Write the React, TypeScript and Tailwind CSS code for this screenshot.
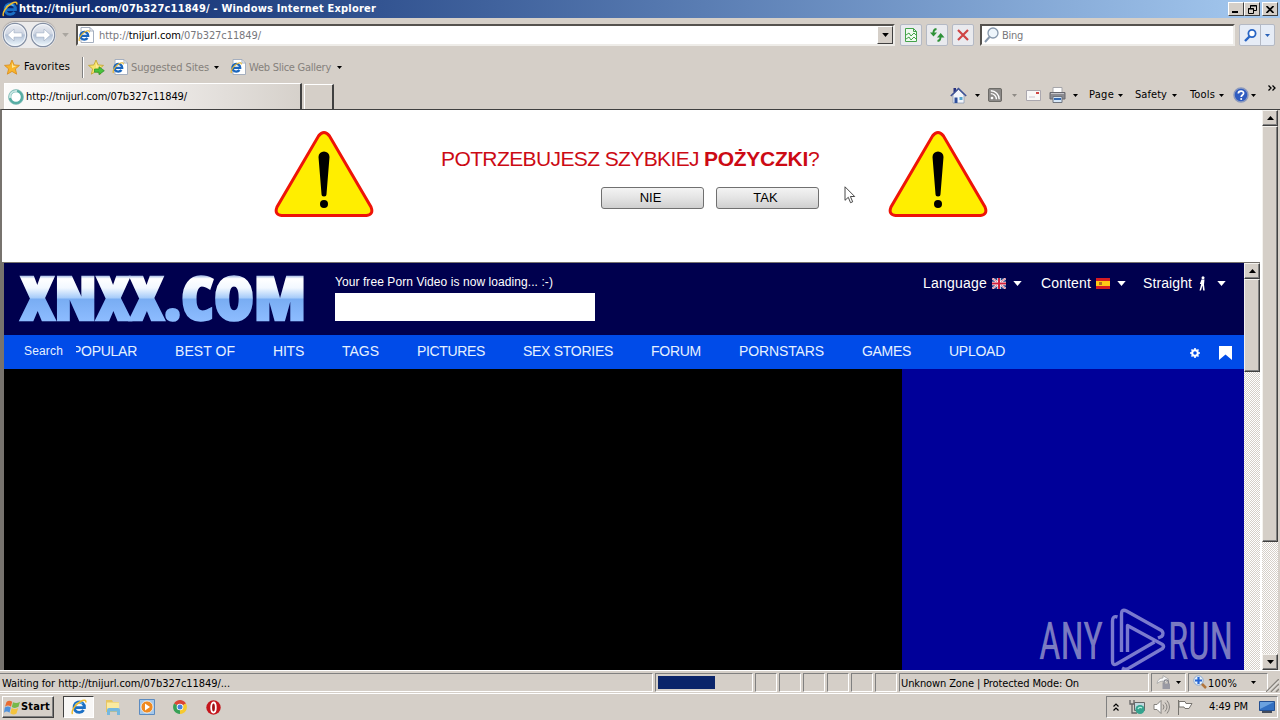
import { ReactNode, useLayoutEffect, useRef, useState } from "react";

const ui = "font-['DejaVu_Sans_Condensed','DejaVu_Sans',sans-serif] font-stretch-condensed text-[11px] leading-[14px]";
const arial = "font-['Liberation_Sans',Arial,sans-serif]";

// Single line of text, tracked so that it fills exactly the given width
const Label = ({ width, className = "", children }: { width: number; className?: string; children: ReactNode }) => {
  const ref = useRef<HTMLSpanElement | null>(null);
  const [spacing, setSpacing] = useState(0);

  useLayoutEffect(() => {
    const el = ref.current;
    if (!el) return;
    const count = el.textContent?.length || 1;
    setSpacing((width - el.getBoundingClientRect().width) / count);
  }, [width]);

  return (
    <span className={`block shrink-0 whitespace-nowrap ${className}`} style={{ width }}>
      <span ref={ref} className="inline-block" style={{ letterSpacing: spacing }}>
        {children}
      </span>
    </span>
  );
};

const Caret = ({ className = "" }: { className?: string }) => (
  <svg className={`h-[3px] w-[5px] shrink-0 ${className}`} viewBox="0 0 5 3" fill="currentColor">
    <path d="M0 0h5L2.5 3z" />
  </svg>
);

const IeIcon = ({ className = "" }: { className?: string }) => (
  <svg className={`shrink-0 ${className}`} viewBox="0 0 16 16" fill="none">
    <path d="M12.6 11A5.200 5.200 0 1 1 13.400 8.600H4.500" stroke="#1b6fc4" strokeWidth="2.900" />
    <path d="M4 6.600a5 5 0 0 1 7.500-2" stroke="#6cc3f5" strokeWidth="1.200" />
    <path d="M1.600 15C-.2 12.500 4 5.500 9.500 2.500c3.300-1.800 6-1.900 5.200 1" stroke="#f0bb2c" strokeWidth="1.500" />
  </svg>
);

const IePage = () => (
  <svg className="h-4 w-4 shrink-0" viewBox="0 0 16 16" fill="none">
    <path d="M3 .5h9l3.500 3.500v11.500H3z" fill="#fff" stroke="#a5afbf" />
    <path d="M12 .5V4h3.500" stroke="#a5afbf" />
    <path d="M9.500 11A3.900 3.900 0 1 1 10.200 8.800H3.500" stroke="#1b66bd" strokeWidth="2.300" />
    <path d="M1.500 14C0 12 3.500 6.500 7.500 4.500c2.300-1.200 4.200-1 3.700.8" stroke="#e3b431" strokeWidth="1.200" />
  </svg>
);

const Star = ({ add = false }: { add?: boolean }) => (
  <svg className="h-[17px] w-[17px] shrink-0" viewBox="0 0 17 17">
    <path d="M8 1l2.100 4.900 5.400.5-4.100 3.500 1.300 5.300L8 12.400l-4.700 2.800 1.300-5.300L.5 6.400l5.400-.5z" fill={add ? "#f5e36b" : "#f9b52b"} stroke={add ? "#bfa22c" : "#d88a1b"} strokeWidth=".8" />
    <path d="M8 3.500l1.300 3.300 3.200.3-4.500 2z" fill="#ffe79a" />
    {add && <path d="M6.500 10h4.500V7.700l5.300 4-5.300 4v-2.500H6.500z" fill="#49c33c" stroke="#258a24" strokeWidth=".7" />}
  </svg>
);

const RoundArrow = ({ flip = false }: { flip?: boolean }) => (
  <svg className={`h-[26px] w-[26px] shrink-0 ${flip ? "-scale-x-100" : ""}`} viewBox="0 0 26 26">
    <defs>
      <linearGradient id="orb" x2="0" y2="1">
        <stop stopColor="#eceef3" />
        <stop offset=".45" stopColor="#ced5e2" />
        <stop offset=".5" stopColor="#b3c1d6" />
        <stop offset="1" stopColor="#f1fbff" />
      </linearGradient>
    </defs>
    <circle cx="13" cy="13" r="11.700" fill="url(#orb)" stroke="#848fa3" strokeWidth="1.200" />
    <circle cx="13" cy="13" r="10.500" fill="none" stroke="#f4f7fb" strokeWidth="1" />
    <path d="M5.500 13l6.500-6v3.800h8v4.400h-8V19z" fill="#fff" stroke="#a3b1c6" strokeWidth=".7" />
  </svg>
);

const WinButton = ({ children, className = "" }: { children: ReactNode; className?: string }) => (
  <div className={`flex h-[14px] w-4 items-center justify-center border border-t-white border-r-[#404040] border-b-[#404040] border-l-white bg-[#d5cfc8] ${className}`}>
    {children}
  </div>
);

const ScrollButton = ({ down = false }: { down?: boolean }) => (
  <div className="flex h-4 w-4 shrink-0 items-center justify-center border border-t-[#f4f2ee] border-r-[#404040] border-b-[#404040] border-l-[#f4f2ee] bg-[#d5cfc8] shadow-[inset_-1px_-1px_#808080]">
    <svg className={`h-1 w-[7px] ${down ? "rotate-180" : ""}`} viewBox="0 0 7 4">
      <path d="M3.500 0L7 4H0z" />
    </svg>
  </div>
);

const thumb = "w-4 shrink-0 border border-t-[#f4f2ee] border-r-[#404040] border-b-[#404040] border-l-[#f4f2ee] bg-[#d5cfc8] shadow-[inset_-1px_-1px_#808080]";
const track = "bg-[repeating-conic-gradient(#ffffff_0_25%,#d5cfc8_0_50%)] bg-[length:2px_2px]";

const Warning = () => (
  <svg className="h-[88px] w-[100px] shrink-0" viewBox="0 0 100 88">
    <path d="M44.500 6Q50 -1 55.500 6L97 77Q100 84.500 92.500 85.500H7.500Q0 84.500 3 77Z" fill="#ffee00" stroke="#ee1408" strokeWidth="3" />
    <path d="M44.500 27a5.500 5.500 0 0 1 11 0L52.500 64a2.500 2.500 0 0 1-5 0Z" />
    <circle cx="50" cy="74" r="4" />
  </svg>
);

const BannerButton = ({ children }: { children: ReactNode }) => (
  <button className={`h-[22px] w-[103px] rounded-[3px] border border-[#707070] bg-linear-to-b from-[#f3f3f3] from-0% via-[#e4e4e4] via-50% to-[#cfcfcf] pr-1 text-center text-[13px] leading-5 text-black ${arial}`}>
    {children}
  </button>
);

const menu: [string, number][] = [
  ["BEST OF", 60],
  ["HITS", 31],
  ["TAGS", 37],
  ["PICTURES", 68],
  ["SEX STORIES", 90],
  ["FORUM", 50],
  ["PORNSTARS", 85],
  ["GAMES", 49],
  ["UPLOAD", 56],
];

const TitleBar = () => (
  <div className="flex h-[18px] shrink-0 items-center bg-linear-to-r from-[#0a246a] to-[#a6caf0] pl-[2px] pr-[2px]">
    <IeIcon className="h-4 w-4" />
    <Label width={357} className="ml-[1px] font-bold text-white">http://tnijurl.com/07b327c11849/ - Windows Internet Explorer</Label>
    <div className="ml-auto flex">
      <WinButton>
        <svg className="h-2 w-2" viewBox="0 0 8 8"><path d="M0 6h6v2H0z" /></svg>
      </WinButton>
      <WinButton>
        <svg className="h-[9px] w-[9px]" viewBox="0 0 9 9" fill="none" stroke="#000">
          <path d="M2.500 3V.5h6v5H6M2 1h7M.5 3.500h5v5h-5zM0 4h6" />
        </svg>
      </WinButton>
      <WinButton className="ml-[2px]">
        <svg className="h-[7px] w-2" viewBox="0 0 8 7" stroke="#000" strokeWidth="1.700"><path d="M.5 0l7 7M7.500 0l-7 7" /></svg>
      </WinButton>
    </div>
  </div>
);

const field = "flex h-[22px] shrink-0 items-center border-2 border-t-[#55524e] border-r-[#eeece8] border-b-[#eeece8] border-l-[#55524e] bg-white";
const toolButton = "flex h-[22px] w-[22px] shrink-0 items-center justify-center rounded-[2px] border border-[#b4b9c4] bg-[#e9eaee]";

const AddressRow = () => (
  <div className="flex h-[34px] shrink-0 items-center pl-[2px]">
    <div className="flex gap-[2px] rounded-full bg-[#ecebeb] shadow-[0_-1px_1px_#a9a5a4]">
      <RoundArrow />
      <RoundArrow flip />
    </div>
    <Caret className="ml-[6px] !h-1 !w-[7px] text-[#aaa6a0]" />
    <div className={`${field} ml-[7px] w-[819px]`}>
      <IePage />
      <Label width={162} className="mt-[2px] ml-[5px] text-[#77777c]">
        http://<span className="text-black">tnijurl.com</span>/07b327c11849/
      </Label>
      <div className="ml-auto flex h-[18px] w-4 items-center justify-center border border-t-white border-r-[#404040] border-b-[#404040] border-l-white bg-[#d5cfc8]">
        <Caret className="!h-1 !w-[7px]" />
      </div>
    </div>
    <div className={`${toolButton} ml-[5px]`}>
      <svg className="h-4 w-4" viewBox="0 0 16 16" fill="none" stroke="#44a24a">
        <path d="M2.500 1.500h8l3 3v10h-11zM10.500 1.500v3h3" fill="#effaf0" />
        <path d="M3 8l3-2 2 3 3-3 2 2M3 12l3-2 2 3 3-3 2 2" />
      </svg>
    </div>
    <div className={`${toolButton} ml-1`}>
      <svg className="h-4 w-4" viewBox="0 0 16 16" fill="none" stroke="#2f9138" strokeWidth="1.800">
        <path d="M7.500 2Q4 2.500 4.500 7M8.500 14q3.500-.5 3-5" />
        <path d="M1 5.500h7L4.500 9.500zM8 10.500h7.500L11.700 6z" fill="#2f9138" stroke="none" />
      </svg>
    </div>
    <div className={`${toolButton} ml-1`}>
      <svg className="h-3 w-3" viewBox="0 0 12 12" stroke="#cf4444" strokeWidth="2.200"><path d="M1 1l10 10M11 1L1 11" /></svg>
    </div>
    <div className={`${field} ml-[6px] w-[255px]`}>
      <svg className="ml-[2px] h-4 w-4" viewBox="0 0 16 16" fill="none" stroke="#8798ac">
        <circle cx="9" cy="6" r="5" fill="#eef5fb" strokeWidth="1.300" />
        <path d="M5.500 10L1 15" strokeWidth="2" />
      </svg>
      <Label width={21} className="mt-[2px] ml-[2px] text-[#77777c]">Bing</Label>
    </div>
    <div className="ml-1 flex h-[22px] w-[36px] shrink-0 items-center rounded-[2px] border border-[#b4b9c4] bg-[#e6ecf6] text-[#2a62b8]">
      <div className="flex h-5 w-[21px] items-center justify-center border-r border-[#b4b9c4]">
        <svg className="h-[13px] w-[13px]" viewBox="0 0 13 13" fill="none" stroke="#2764c4">
          <circle cx="8" cy="4.500" r="3.600" fill="#fff" strokeWidth="1.800" />
          <path d="M5.500 7.500L1 12" strokeWidth="2.400" />
        </svg>
      </div>
      <Caret className="ml-1" />
    </div>
  </div>
);

const FavoritesRow = () => (
  <div className="flex h-[30px] shrink-0 items-center pl-1">
    <Star />
    <Label width={46} className="ml-[3px]">Favorites</Label>
    <div className="ml-[12px] h-[21px] w-[2px] border-l border-l-[#808080] bg-white" />
    <div className="ml-1 flex"><Star add /></div>
    <div className="ml-[7px] flex items-center text-[#85817c]">
      <IePage />
      <Label width={78} className="mt-px ml-[3px]">Suggested Sites</Label>
      <Caret className="ml-[5px] text-black" />
    </div>
    <div className="ml-[11px] flex items-center text-[#85817c]">
      <IePage />
      <Label width={82} className="mt-px ml-[3px]">Web Slice Gallery</Label>
      <Caret className="ml-[6px] text-black" />
    </div>
  </div>
);

const TabRow = () => (
  <div className="flex h-[27px] shrink-0 items-end pl-1">
    <div className="flex h-[26px] w-[298px] shrink-0 items-center border-t border-r-2 border-l border-t-white border-r-[#404040] border-l-white bg-linear-to-r from-[#fcfbfa] via-[#eeebe9] to-[#d6d1cb] pl-[3px]">
      <svg className="h-4 w-4" viewBox="0 0 16 16" fill="none">
        <circle cx="8" cy="8" r="6.200" fill="#fff" stroke="#56ada4" strokeWidth="2.800" />
        <path d="M2 9A6 6 0 0 1 9 2" stroke="#c6e4e2" strokeWidth="2" />
        <circle cx="8" cy="8" r="7.500" stroke="#8cbdb9" strokeWidth=".6" />
      </svg>
      <Label width={161} className="ml-[2px]">http://tnijurl.com/07b327c11849/</Label>
    </div>
    <div className="ml-[2px] h-[25px] w-[30px] border-t border-r-2 border-l border-t-white border-r-[#404040] border-l-white" />
    <div className="mb-[2px] ml-[616px] flex h-6 items-center">
      <svg className="h-[17px] w-[17px]" viewBox="0 0 17 17">
        <path d="M3.500 1h2.500v4h-2.500z" fill="#27317d" />
        <path d="M3 8l5.500-5.500L14 8v8H3z" fill="#f2f5fa" stroke="#8493b0" strokeWidth=".7" />
        <path d="M.8 9L8.500 1.500 16.200 9" fill="none" stroke="#3e5297" strokeWidth="1.600" />
        <path d="M4.500 10.500h3V16h-3z" fill="#30509c" />
        <path d="M9.500 10h3v3h-3z" fill="#53a5cf" />
      </svg>
      <Caret className="ml-[8px]" />
      <svg className="ml-2 h-[14px] w-[14px]" viewBox="0 0 15 15" fill="none" stroke="#fff" strokeWidth="1.500">
        <rect x=".5" y=".5" width="14" height="14" rx="1.500" fill="#8c8a88" stroke="#65635f" strokeWidth="1" />
        <path d="M3 6a6 6 0 0 1 6 6M3 3a9 9 0 0 1 9 9" />
        <circle cx="4.300" cy="10.700" r=".7" />
      </svg>
      <Caret className="ml-[10px] text-[#8f8b86]" />
      <svg className="ml-[9px] h-[11px] w-[15px]" viewBox="0 0 15 11">
        <path d="M.5.5h14v10H.5z" fill="#f8f7f7" stroke="#aaa7ae" />
        <path d="M10 2h3v2h-3z" fill="#cf4545" />
        <path d="M3 7h6" stroke="#c8c5d0" />
      </svg>
      <svg className="ml-[8px] h-4 w-[17px]" viewBox="0 0 17 16">
        <path d="M4 .5h9V6H4z" fill="#fff" stroke="#a6a6aa" />
        <path d="M1 5.500h15V12H1z" fill="#8b8b90" stroke="#68686e" />
        <path d="M2 6.500h13" stroke="#c5c5ca" />
        <path d="M4 9.500h9v6H4z" fill="#d6e7f7" stroke="#70757e" />
        <path d="M5 12h7" stroke="#3469b0" strokeWidth="2" />
      </svg>
      <Caret className="ml-[7px]" />
      <Label width={25} className="ml-[11px]">Page</Label>
      <Caret className="ml-1" />
      <Label width={32} className="ml-[12px]">Safety</Label>
      <Caret className="ml-[5px]" />
      <Label width={25} className="ml-[13px]">Tools</Label>
      <Caret className="ml-1" />
      <svg className="ml-[9px] h-4 w-4" viewBox="0 0 16 16" fill="none">
        <circle cx="8" cy="8" r="7" fill="#2f5cc0" stroke="#8b99bd" strokeWidth="1.500" />
        <path d="M5.300 6.500C5.500 3.300 10.700 3.300 10.600 6.300 10.500 8 8.200 8 8.200 10" stroke="#fff" strokeWidth="1.700" />
        <circle cx="8.200" cy="12" r="1" fill="#fff" />
      </svg>
      <Caret className="ml-[2px]" />
    </div>
    <svg className="mb-[18px] ml-[12px] h-[6px] w-2" viewBox="0 0 8 6" fill="none" stroke="#000" strokeWidth="1.300">
      <path d="M.5.5L3 3 .5 5.500M4.500.5L7 3 4.500 5.500" />
    </svg>
  </div>
);

const Banner = () => (
  <div className="flex h-[152px] shrink-0 pt-5">
    <div className="ml-[272px]"><Warning /></div>
    <div className="ml-[67px] w-[380px]">
      <h1 className={`mt-[17px] flex text-[21px] leading-6 text-[#cc0a14] ${arial}`}>
        <Label width={258}>POTRZEBUJESZ SZYBKIEJ</Label>
        <Label width={104} className="ml-[5px] font-bold">POŻYCZKI</Label>
        <span>?</span>
      </h1>
      <div className="mt-4 flex justify-end gap-3 pr-[2px]">
        <BannerButton>NIE</BannerButton>
        <BannerButton>TAK</BannerButton>
      </div>
    </div>
    <svg className="mt-[56px] ml-[23px] h-[18px] w-3" viewBox="0 0 12 18">
      <path d="M1 .8v13.500l3.300-3 2.200 5.400 2.200-.9-2.300-5.300h4.300z" fill="#fff" stroke="#343434" strokeWidth=".9" />
    </svg>
    <div className="ml-[32px]"><Warning /></div>
  </div>
);

const SiteHeader = () => (
  <div className="flex h-[72px] shrink-0 bg-[#00004e] text-white">
    <svg className="ml-[10px] h-[72px] w-[304px] shrink-0 overflow-visible" viewBox="0 0 304 72">
      <defs>
        <linearGradient id="ice" gradientUnits="userSpaceOnUse" x1="0" y1="12" x2="0" y2="58">
          <stop stopColor="#8fa9dc" />
          <stop offset=".08" stopColor="#ffffff" />
          <stop offset=".28" stopColor="#f2f8ff" />
          <stop offset=".49" stopColor="#a9cdfa" />
          <stop offset=".53" stopColor="#79adf3" />
          <stop offset="1" stopColor="#8dbcff" />
        </linearGradient>
      </defs>
      <text x="7" y="56.500" textLength="285" lengthAdjust="spacingAndGlyphs" className="font-['Open_Sans','Noto_Sans',sans-serif] text-[60px] font-extrabold" fill="url(#ice)" stroke="url(#ice)" strokeWidth="2.500">XNXX.COM</text>
    </svg>
    <div className="mt-[11px] ml-[17px]">
      <Label width={218} className="text-[12px] leading-4">Your free Porn Video is now loading... :-)</Label>
      <div className="mt-[3px] h-7 w-[260px] bg-white" />
    </div>
    <div className="mt-[11px] ml-[328px] flex h-[18px] items-center text-[14px] leading-[18px]">
      <Label width={64}>Language</Label>
      <svg className="ml-[5px] h-[11px] w-[14px]" viewBox="0 0 14 11">
        <path d="M0 0h14v11H0z" fill="#263c81" />
        <path d="M0 0l14 11M14 0L0 11" stroke="#fff" strokeWidth="2" />
        <path d="M0 0l14 11M14 0L0 11" stroke="#d1203d" strokeWidth=".7" />
        <path d="M7 0v11M0 5.500h14" stroke="#fff" strokeWidth="3.400" />
        <path d="M7 0v11M0 5.500h14" stroke="#d1203d" strokeWidth="2" />
      </svg>
      <Caret className="ml-[7px] !h-[5px] !w-[9px]" />
      <Label width={50} className="ml-[19px]">Content</Label>
      <svg className="ml-[5px] h-[11px] w-[14px]" viewBox="0 0 14 11">
        <path d="M0 0h14v11H0z" fill="#d51c23" />
        <path d="M0 3h14v5H0z" fill="#ffc815" />
        <path d="M3 4h3v3H3z" fill="#b06e22" />
      </svg>
      <Caret className="ml-[7px] !h-[5px] !w-[9px]" />
      <Label width={49} className="ml-[17px]">Straight</Label>
      <svg className="ml-[7px] h-[15px] w-[6px]" viewBox="0 0 6 15" fill="#fff">
        <circle cx="4" cy="1.700" r="1.500" />
        <path d="M2.500 3.500h3l-.5 5 .7 6H4.200L3.500 9.500 2 14.500H.5L2.200 8H.8z" />
      </svg>
      <Caret className="ml-[12px] !h-[5px] !w-[9px]" />
    </div>
  </div>
);

const SiteMenu = () => (
  <div className="flex h-[34px] shrink-0 items-center bg-[#004be8] pb-[2px] text-[14px] leading-[18px] text-[#e6f1ff]">
    <Label width={39} className="ml-[20px] text-[12px]">Search</Label>
    <div className="ml-[13px] flex h-[18px] w-[61px] justify-end overflow-hidden">
      <Label width={65}>POPULAR</Label>
    </div>
    {menu.map(([name, width]) => (
      <Label key={name} width={width} className="ml-[38px]">{name}</Label>
    ))}
    <svg className="mt-1 ml-[185px] h-[10px] w-[10px]" viewBox="0 0 10 10" fill="none" stroke="#fff">
      <circle cx="5" cy="5" r="2.800" strokeWidth="2" />
      <path d="M5 0v2M5 8v2M0 5h2M8 5h2M1.500 1.500l1 1M7.500 7.500l1 1M8.500 1.500l-1 1M2.500 7.500l-1 1" strokeWidth="1.600" />
    </svg>
    <svg className="mt-1 ml-[19px] h-[14px] w-[13px]" viewBox="0 0 13 14" fill="#fff">
      <path d="M0 0h13v14L6.500 8.500 0 14z" />
    </svg>
  </div>
);

const Watermark = () => (
  <svg className="h-[65px] w-[196px] overflow-visible" viewBox="0 0 196 65" fill="#b0b0d4" fillOpacity=".7">
    <g className="font-['Roboto',sans-serif] text-[52px]" stroke="#b0b0d4" strokeOpacity=".3" strokeWidth=".6">
      <text x="1" y="54" textLength="64" lengthAdjust="spacingAndGlyphs">ANY</text>
      <text x="130" y="54" textLength="65" lengthAdjust="spacingAndGlyphs">RUN</text>
    </g>
    <g fill="none" stroke="#a9a9e2" strokeOpacity=".72" strokeWidth="3.400" strokeLinejoin="round">
      <path d="M79.500 12q-5-1.500-5 4v40q0 5 4 3l38-22" />
      <path d="M83.500 47V9q0-5.500 5-3l35 19.500q3 3 0 6l-3.500 1.500" />
      <path d="M89.500 47V20.500l35 19q2 2 0 4L92 62.500q-4 3-8 .5" />
    </g>
  </svg>
);

const panel = "h-[19px] shrink-0 border border-t-[#808080] border-r-white border-b-white border-l-[#808080]";

const StatusBar = () => (
  <div className="flex h-6 shrink-0 items-center border-t border-b border-t-white border-b-white">
    <div className={`${panel} flex w-[653px] items-center border-l-0 pl-[2px]`}>
      <Label width={228} className="mt-[3px]">Waiting for http://tnijurl.com/07b327c11849/...</Label>
    </div>
    <div className={`${panel} ml-[2px] w-[98px] p-[2px]`}>
      <div className="h-[13px] w-[57px] bg-[#0a246a]" />
    </div>
    {[0, 1, 2, 3, 4, 5].map((n) => (
      <div key={n} className={`${panel} ml-[2px] w-[22px]`} />
    ))}
    <div className={`${panel} ml-[2px] flex w-[250px] items-center`}>
      <Label width={178} className="mt-[3px] ml-px">Unknown Zone | Protected Mode: On</Label>
    </div>
    <div className={`${panel} ml-[2px] flex w-[35px] items-center pl-1`}>
      <svg className="h-4 w-4" viewBox="0 0 16 16" fill="none">
        <path d="M1 9.500Q2 4 7 4V1.500l6 4-6 4.500V7Q4 7 1 9.500z" fill="#f8f8f8" stroke="#a3a3a3" strokeWidth=".8" />
        <path d="M8 10V8a2.200 2.200 0 0 1 4.400 0v2" stroke="#85858c" strokeWidth="1.300" />
        <path d="M6.500 9.500h7.500V15H6.500z" fill="#9999a3" />
      </svg>
      <Caret className="ml-1" />
    </div>
    <div className={`${panel} ml-[2px] flex w-[80px] items-center pl-1`}>
      <svg className="h-[14px] w-[14px]" viewBox="0 0 14 14" fill="none">
        <path d="M8 8l5 5" stroke="#b2763c" strokeWidth="2.500" />
        <circle cx="5.500" cy="5.500" r="4.700" fill="#e7f2fb" stroke="#8ba8d0" />
        <path d="M5.500 2v7M2 5.500h7" stroke="#2765d4" strokeWidth="2.200" />
      </svg>
      <Label width={29} className="mt-[3px] ml-px">100%</Label>
      <Caret className="ml-[14px]" />
    </div>
    <svg className="mt-[7px] ml-[-2px] h-[13px] w-[13px]" viewBox="0 0 13 13" stroke="#88847e" strokeWidth="1.500">
      <path d="M0 13L13 0M5 13l8-8M10 13l3-3" />
      <path d="M1.500 13L13 1.500M6.500 13L13 6.500" stroke="#fff" strokeWidth=".7" />
    </svg>
  </div>
);

const Taskbar = () => (
  <div className="flex h-[26px] shrink-0 items-center pl-[2px]">
    <div className="flex h-[22px] w-[52px] items-center border border-t-white border-r-[#404040] border-b-[#404040] border-l-white pl-px shadow-[inset_-1px_-1px_#808080]">
      <svg className="h-4 w-4" viewBox="0 0 16 16">
        <path d="M2.500 3Q5 .5 8.200 2.700L7 7.700Q4 5.500 1 7.700z" fill="#e86b31" />
        <path d="M9 3.200q3.500 1.800 7-.4l-1.500 5q-3.500 2.200-6.700.2z" fill="#76b94a" />
        <path d="M.8 8.500q3-2.200 6 0L5.500 13.700q-3-2.200-5.500 0z" fill="#4e91dc" />
        <path d="M7.700 8.900q3.200 2 6.500.2L12.500 14.500q-3 2-6.200-.3z" fill="#f4c33c" />
      </svg>
      <Label width={29} className="ml-px font-bold">Start</Label>
    </div>
    <div className="ml-[9px] flex h-[22px] w-[31px] items-center justify-center border border-t-[#404040] border-r-white border-b-white border-l-[#404040] bg-[#f8f7f6]">
      <IeIcon className="h-4 w-4" />
    </div>
    <svg className="ml-[11px] h-4 w-4" viewBox="0 0 16 16">
      <path d="M1 1h6l1 2h6v10H1z" fill="#e7c563" />
      <path d="M2 3.500h12V11H2z" fill="#fbeaa0" />
      <path d="M2 16v-5q0-2 2-2h9q2 0 2 2v5h-3v-3.500H5V16z" fill="#75b8df" />
    </svg>
    <svg className="ml-[18px] h-4 w-4" viewBox="0 0 16 16">
      <path d="M.5.5h15v15H.5z" fill="#a5c8ea" stroke="#5c8bc0" />
      <circle cx="8" cy="8" r="6" fill="#ef8a21" stroke="#fff" strokeWidth=".7" />
      <path d="M6 4.500l5 3.500-5 3.500z" fill="#fff" />
    </svg>
    <svg className="ml-[18px] h-[14px] w-[14px]" viewBox="0 0 14 14">
      <path d="M7 7L1 3.500A7 7 0 0 1 13 3.500z" fill="#dc4535" />
      <path d="M7 7V14A7 7 0 0 1 1 3.500z" fill="#37a156" />
      <path d="M7 7l6-3.500A7 7 0 0 1 7 14z" fill="#f6ca2f" />
      <circle cx="7" cy="7" r="3.300" fill="#fff" />
      <circle cx="7" cy="7" r="2.500" fill="#4682dc" />
    </svg>
    <svg className="ml-[19px] h-[15px] w-[15px]" viewBox="0 0 15 15">
      <circle cx="7.500" cy="7.500" r="7.200" fill="#c5151c" />
      <ellipse cx="7.500" cy="7.500" rx="2.300" ry="5" fill="#a01015" stroke="#fff" strokeWidth="1.800" />
    </svg>
    <div className="ml-auto mr-[2px] flex h-[22px] w-[172px] shrink-0 items-center border border-t-[#808080] border-r-white border-b-white border-l-[#808080] pl-[6px]">
      <svg className="h-2 w-[6px]" viewBox="0 0 6 8" fill="none" stroke="#000" strokeWidth="1.200">
        <path d="M.5 3.500L3 1l2.500 2.500M.5 7.500L3 5l2.500 2.500" />
      </svg>
      <svg className="ml-[10px] h-4 w-[17px]" viewBox="0 0 17 16" fill="none">
        <path d="M5.500 3.500h10v8h-10z" fill="#c1d9df" stroke="#666" />
        <path d="M1 1v4h4V1M3 5v9h5" stroke="#666" strokeWidth="1.300" />
        <circle cx="11" cy="10.500" r="4.500" fill="#35a38e" />
        <path d="M9 10a2.500 2.500 0 0 1 4-1" stroke="#b3efe0" strokeWidth="1.300" />
      </svg>
      <svg className="ml-[7px] h-4 w-[17px]" viewBox="0 0 17 16" fill="none" stroke="#85827e">
        <path d="M1 5.500h3l4-4v13l-4-4H1z" fill="#fff" />
        <path d="M10 5.500q2 2.500 0 5M12 3.500q4 4.500 0 9M14 1.500q5 6.500 0 13" />
      </svg>
      <svg className="ml-[7px] h-4 w-4" viewBox="0 0 16 16" fill="none" stroke="#77746f">
        <path d="M1.500 1v15M2 2.500h6l1 2h6l-3 5H8l-1-1.500H2z" fill="#fff" />
      </svg>
      <Label width={39} className="ml-[16px]">4:49 PM</Label>
      <svg className="ml-[11px] h-[14px] w-4" viewBox="0 0 16 14">
        <path d="M.5 1.500h15v9H.5z" fill="#3270c2" stroke="#234f91" />
        <path d="M1 2h14L1 9z" fill="#6ba2df" />
        <path d="M3 11h10v2H3z" fill="#444b5a" />
      </svg>
    </div>
  </div>
);

const App = () => {
  return (
    <div className={`flex h-[720px] w-[1280px] flex-col overflow-hidden bg-[#d5cfc8] text-black ${ui}`}>
      <TitleBar />
      <AddressRow />
      <FavoritesRow />
      <TabRow />

      <div className="flex h-[561px] shrink-0 border-t border-l-2 border-t-[#404040] border-l-[#77736e]">
        <div className="flex w-[1260px] flex-col bg-white">
          <Banner />
          <div className="flex h-[408px] w-[1258px] border-t border-l-2 border-t-[#77736e] border-l-[#77736e]">
            <div className={`flex w-[1240px] flex-col ${arial}`}>
              <SiteHeader />
              <SiteMenu />
              <div className="flex flex-1 bg-black">
                <div className="ml-auto flex w-[342px] items-end justify-end bg-[#000099] pr-[10px]">
                  <Watermark />
                </div>
              </div>
            </div>
            <div className={`flex w-4 flex-col ${track}`}>
              <ScrollButton />
              <div className={`${thumb} h-[93px]`} />
            </div>
          </div>
        </div>
        <div className={`flex w-4 flex-col ${track}`}>
          <ScrollButton />
          <div className={`${thumb} h-[416px]`} />
          <div className="mt-auto">
            <ScrollButton down />
          </div>
        </div>
      </div>

      <StatusBar />
      <Taskbar />
    </div>
  );
};

export default App;
